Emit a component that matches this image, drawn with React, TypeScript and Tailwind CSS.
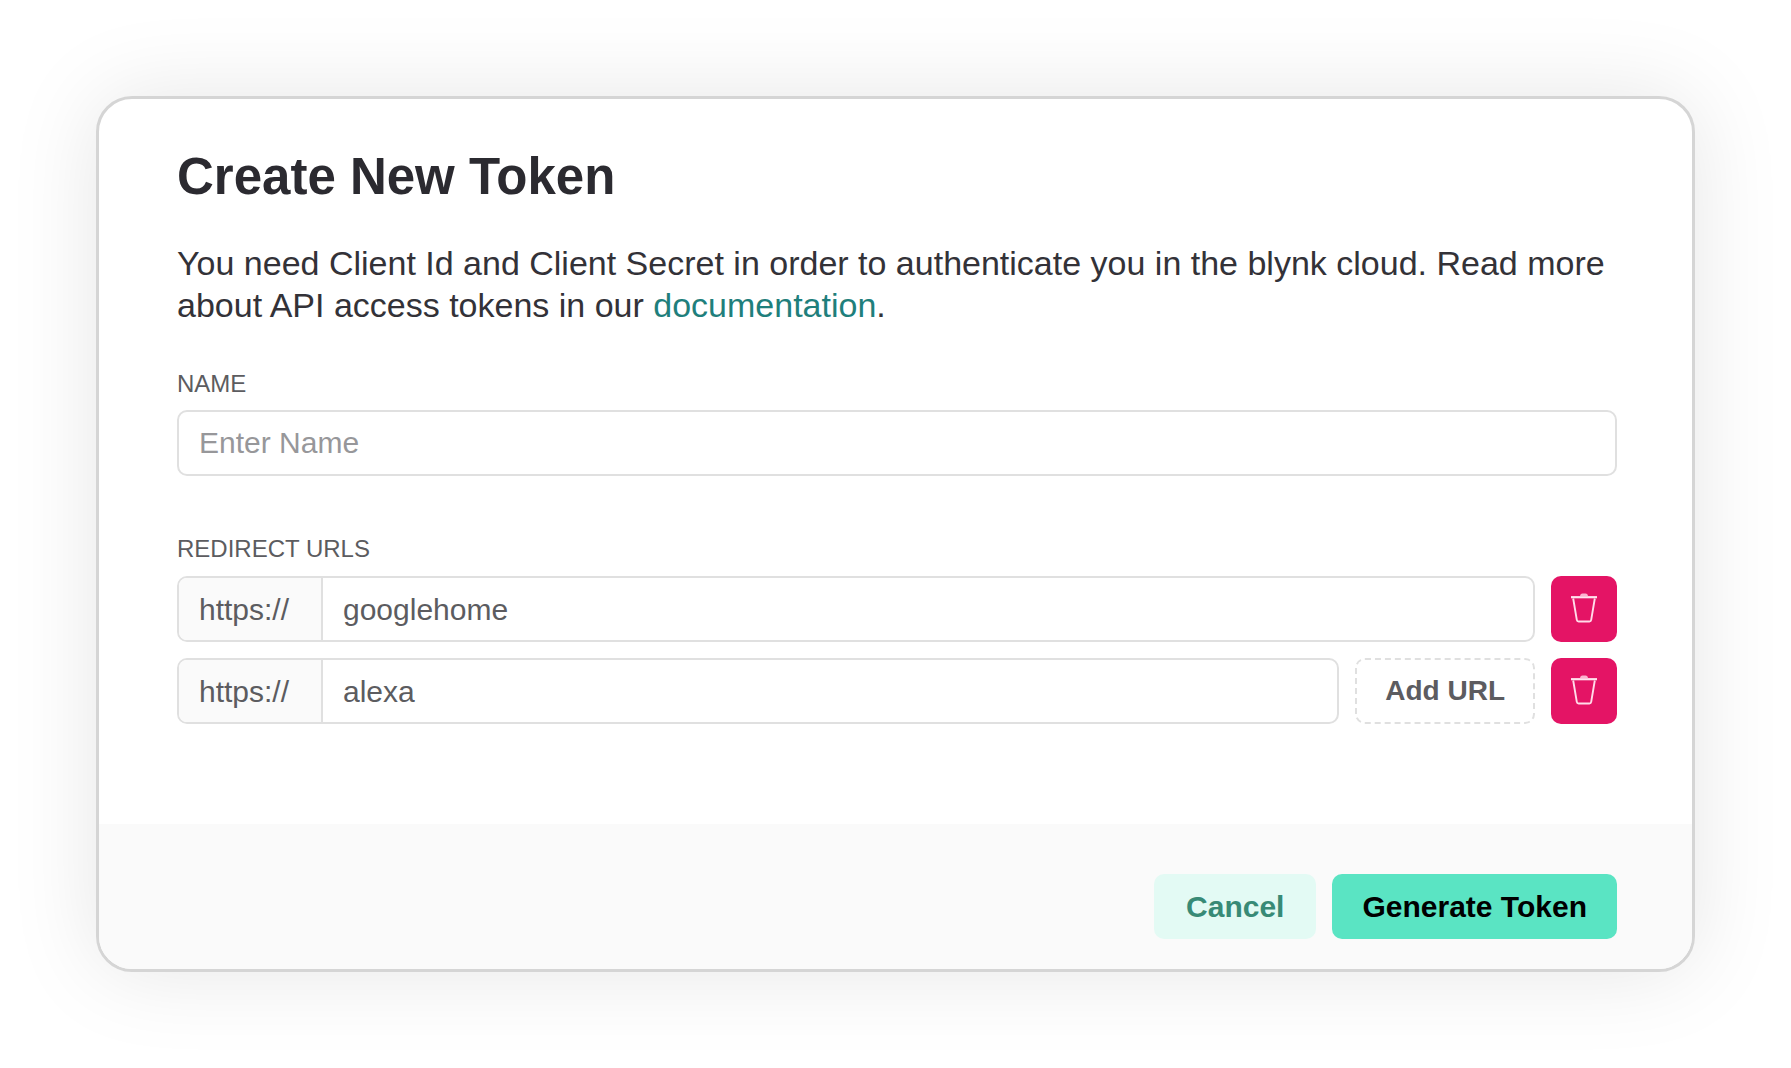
import { useId, useState } from "react";

function TrashIcon() {
  return (
    <svg width="28" height="32" viewBox="0 0 28 32" fill="none" aria-hidden="true">
      <path d="M1 4.200h26" strokeWidth="2.200" stroke="#ffe3ee" />
      <path d="M10 3.200C10.200 1.400 11 .5 12.500.5h3c1.500 0 2.300.9 2.500 2.700z" fill="#fbb4cf" />
      <path
        d="M3.200 5.500l3.600 21.300c.2 1.200.8 1.700 1.800 1.700h10.800c1 0 1.600-.5 1.800-1.700l3.600-21.300"
        strokeWidth="1.900"
        stroke="#ffdce9"
      />
    </svg>
  );
}

function UrlRow({
  value,
  onChange,
  onAdd,
  onRemove,
  index,
}: {
  value: string;
  onChange: (value: string) => void;
  onAdd?: () => void;
  onRemove: () => void;
  index: number;
}) {
  const id = useId();
  return (
    <div className="flex h-[66px] gap-4">
      <div className="flex min-w-0 flex-1 overflow-hidden rounded-[10px] border-2 border-[#e0e0e0] bg-white">
        <label
          htmlFor={id}
          className="flex w-[144px] shrink-0 items-center border-r-2 border-[#e0e0e0] bg-[#fafafa] pl-5"
        >
          https://
        </label>
        <input
          id={id}
          aria-label={`Redirect URL ${index + 1}`}
          className="min-w-0 flex-1 px-5 outline-none"
          value={value}
          onChange={(e) => onChange(e.target.value)}
        />
      </div>
      {onAdd && (
        <button
          type="button"
          onClick={onAdd}
          className="shrink-0 rounded-[10px] border-2 border-dashed border-[#e0e0e0] px-7 text-[28px] font-bold"
        >
          Add URL
        </button>
      )}
      <button
        type="button"
        aria-label="Delete URL"
        onClick={onRemove}
        className="flex w-[66px] shrink-0 items-center justify-center rounded-[10px] bg-[#e41465]"
      >
        <TrashIcon />
      </button>
    </div>
  );
}

export default function App() {
  const [name, setName] = useState("");
  const [urls, setUrls] = useState(["googlehome", "alexa"]);

  return (
    <main className="min-h-screen bg-white p-24 font-['Liberation_Sans',Arial,sans-serif] text-[30px] text-[#5c5c60]">
      <form
        onSubmit={(e) => e.preventDefault()}
        className="overflow-hidden rounded-[36px] border-3 border-[#d5d5d5] bg-white shadow-[0_0_90px_rgba(0,0,0,0.10)]"
      >
        <div className="pt-12 pr-[75px] pb-[100px] pl-[78px]">
          <h1 className="text-[51px] leading-[60px] font-bold text-[#2b2a30]">Create New Token</h1>
          <p className="mt-[35px] text-[34px] leading-[42px] text-[#333238]">
            You need Client Id and Client Secret in order to authenticate you in the blynk cloud. Read more about API
            access tokens in our{" "}
            <a href="#documentation" className="text-[#1f7f7c]">
              documentation
            </a>
            .
          </p>

          <label htmlFor="token-name" className="mt-11 block text-[24px] leading-7">
            NAME
          </label>
          <input
            id="token-name"
            className="mt-3 block h-[66px] w-full rounded-[10px] border-2 border-[#e0e0e0] px-5 outline-none placeholder:text-[#97979a]"
            placeholder="Enter Name"
            value={name}
            onChange={(e) => setName(e.target.value)}
          />

          <h2 className="mt-[59px] text-[24px] leading-7">REDIRECT URLS</h2>
          <div className="mt-[13px] flex flex-col gap-4">
            {urls.map((url, i) => (
              <UrlRow
                key={i}
                index={i}
                value={url}
                onChange={(v) => setUrls(urls.map((u, j) => (j === i ? v : u)))}
                onAdd={i === urls.length - 1 ? () => setUrls([...urls, ""]) : undefined}
                onRemove={() => setUrls(urls.filter((_, j) => j !== i))}
              />
            ))}
          </div>
        </div>

        <footer className="flex justify-end gap-4 bg-[#fafafa] pt-[50px] pr-[75px] pb-[30px] pl-[78px] font-bold">
          <button type="button" className="h-[65px] rounded-[10px] bg-[#e3faf4] px-8 text-[#388a76]">
            Cancel
          </button>
          <button type="submit" className="h-[65px] rounded-[10px] bg-[#5ae4c3] px-[30px] text-black">
            Generate Token
          </button>
        </footer>
      </form>
    </main>
  );
}
